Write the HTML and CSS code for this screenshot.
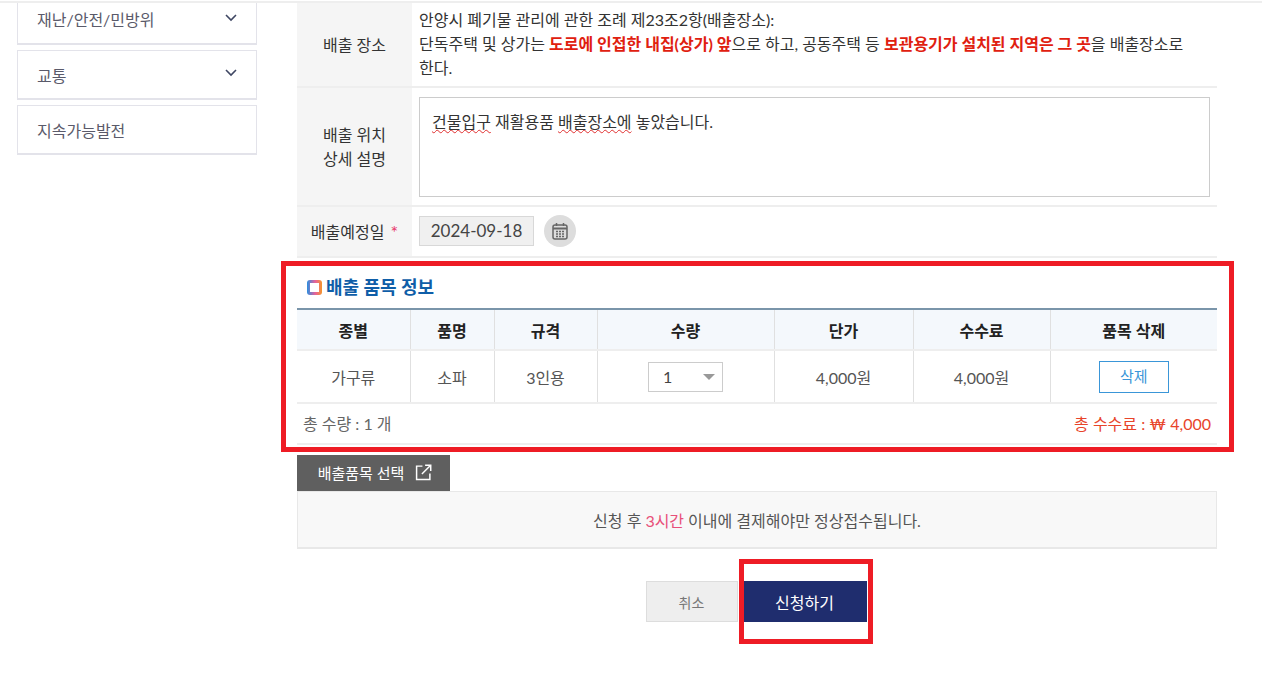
FILE: index.html
```html
<!DOCTYPE html>
<html lang="ko">
<head>
  <meta charset="UTF-8" />
  <meta name="viewport" content="width=device-width, initial-scale=1.0" />
  <title>배출 신청</title>
  <link rel="stylesheet" href="styles.css">
</head>
<body>

  <div class="top-line"></div>

  <div class="wrap">
    <div class="side">
      <div class="side-item first">
        재난/안전/민방위
        <svg class="chev" width="14" height="9" viewBox="0 0 14 9"><path d="M2 2l5 5 5-5" fill="none" stroke="#3f4763" stroke-width="1.6"/></svg>
      </div>
      <div class="side-item">
        교통
        <svg class="chev" width="14" height="9" viewBox="0 0 14 9"><path d="M2 2l5 5 5-5" fill="none" stroke="#3f4763" stroke-width="1.6"/></svg>
      </div>
      <div class="side-item">지속가능발전</div>
    </div>

    <div class="main">
      <div class="form-row row-place">
        <div class="form-label">배출 장소</div>
        <div class="form-value place-text">
          안양시 폐기물 관리에 관한 조례 제23조2항(배출장소):<br>
          단독주택 및 상가는 <strong>도로에 인접한 내집(상가) 앞</strong>으로 하고, 공동주택 등 <strong>보관용기가 설치된 지역은 그 곳</strong>을 배출장소로 한다.
        </div>
      </div>
      <div class="form-row row-detail">
        <div class="form-label">배출 위치<br>상세 설명</div>
        <div class="form-value">
          <div class="textbox"><span class="typo">건물입구</span> 재활용품 <span class="typo">배출장소에</span> 놓았습니다.</div>
        </div>
      </div>
      <div class="form-row row-date">
        <div class="form-label">배출예정일 <span class="req">*</span></div>
        <div class="form-value date-value">
          <div class="date-input">2024-09-18</div>
          <div class="cal-btn">
            <svg width="16" height="18" viewBox="0 0 16 18"><rect x="1" y="3" width="14" height="14" rx="2" fill="none" stroke="#666" stroke-width="1.5"/><path d="M1 6.5h14" stroke="#666" stroke-width="2"/><path d="M4.5 1v3M11.5 1v3" stroke="#666" stroke-width="1.5"/><path d="M4 9.5h2M7 9.5h2M10 9.5h2M4 12h2M7 12h2M10 12h2M4 14.5h2M7 14.5h2M10 14.5h2" stroke="#666" stroke-width="1.4"/></svg>
          </div>
        </div>
      </div>

      <h3 class="sec-title"><span class="sec-icon"></span>배출 품목 정보</h3>

      <table class="item-table">
        <thead>
          <tr>
            <th class="col1">종별</th>
            <th class="col2">품명</th>
            <th class="col3">규격</th>
            <th class="col4">수량</th>
            <th class="col5">단가</th>
            <th class="col6">수수료</th>
            <th>품목 삭제</th>
          </tr>
        </thead>
        <tbody>
          <tr>
            <td>가구류</td>
            <td>소파</td>
            <td>3인용</td>
            <td><div class="qty">1<span class="qty-arrow"></span></div></td>
            <td>4,000원</td>
            <td>4,000원</td>
            <td><button class="del-btn">삭제</button></td>
          </tr>
        </tbody>
      </table>

      <div class="totals">
        <span>총 수량 : 1 개</span>
        <span class="total-fee">총 수수료 : ₩ 4,000</span>
      </div>

      <button class="pick-btn">
        배출품목 선택
        <svg width="17" height="17" viewBox="0 0 16 16"><path d="M7 2H1.500v12.500h12.500V9" fill="none" stroke="#fff" stroke-width="1.4"/><path d="M6.500 9.500L14.500 1.500M9.500 1.200h5.300v5.300" fill="none" stroke="#fff" stroke-width="1.4"/></svg>
      </button>
      <div class="notice">신청 후 <span class="pink">3시간</span> 이내에 결제해야만 정상접수됩니다.</div>

      <div class="actions">
        <button class="btn-cancel">취소</button>
        <button class="btn-submit">신청하기</button>
      </div>
    </div>
  </div>

  <div class="mark mark-table"></div>
  <div class="mark mark-submit"></div>

</body>
</html>
```

FILE: styles.css
```css
* {
  box-sizing: border-box;
}

html, body {
  height: 673px;
  overflow: hidden;
}

body {
  margin: 0;
  padding-top: 1px;
  background: #fff;
  color: #333;
  font-family: Lato, "Noto Sans CJK KR", sans-serif;
  font-size: 16px;
  position: relative;
}

button {
  font-family: inherit;
  cursor: pointer;
}

.top-line {
  height: 2px;
  background: #eee;
}

.wrap {
  display: flex;
  gap: 40px;
  padding-left: 17px;
}

/* left menu */
.side {
  width: 240px;
  display: flex;
  flex-direction: column;
  gap: 5px;
}

.side-item {
  height: 50px;
  padding: 0 18px 0 19px;
  border: 1px solid #e3e3ea;
  border-bottom-width: 2px;
  display: flex;
  align-items: center;
  justify-content: space-between;
  color: #5a5a6a;
}

.side-item.first {
  height: 42px;
  padding-bottom: 8px;
  border-top: 0;
}

.chev {
  margin-top: -4px;
}

/* form rows */
.main {
  width: 920px;
}

.form-row {
  display: flex;
  border-bottom: 2px solid #eee;
}

.form-label {
  width: 115px;
  flex-shrink: 0;
  background: #f5f5f5;
  display: flex;
  align-items: center;
  justify-content: center;
  text-align: center;
  line-height: 24px;
  color: #333;
}

.form-value {
  flex: 1;
  padding-left: 7px;
}

.row-place {
  height: 85px;
}

.place-text {
  padding-top: 5px;
  padding-right: 30px;
  line-height: 24px;
}

.place-text strong {
  color: #e0200f;
}

.row-detail {
  height: 119px;
}

.textbox {
  width: 791px;
  height: 100px;
  margin-top: 9px;
  padding: 12px;
  border: 1px solid #ccc;
  line-height: 24px;
}

.typo {
  text-decoration: underline wavy #e03030 1px;
}

.row-date {
  height: 51px;
}

.date-value {
  display: flex;
  align-items: center;
  gap: 10px;
  padding-bottom: 2px;
}

.date-input {
  width: 115px;
  height: 30px;
  background: #f0f0f0;
  border: 1px solid #d8d8d8;
  color: #444;
  text-align: center;
  font-size: 17px;
  line-height: 28px;
}

.cal-btn {
  width: 32px;
  height: 32px;
  border-radius: 50%;
  background: #ddd;
  display: flex;
  align-items: center;
  justify-content: center;
}

.req {
  color: #e8386a;
  margin-left: 6px;
  font-size: 18px;
}

/* item table */
.sec-title {
  margin: 0;
  height: 50px;
  padding: 8px 0 0 10px;
  display: flex;
  align-items: flex-start;
  color: #0f5ea8;
  font-size: 18px;
  line-height: 42px;
  font-weight: 700;
}

.sec-icon {
  width: 15px;
  height: 15px;
  margin: 14px 4px 0 0;
  border: 3px solid transparent;
  border-radius: 3px;
  background: linear-gradient(#fff, #fff) padding-box, linear-gradient(90deg, #2a8fe0, #e8609a 55%, #f5962a) border-box;
}

.item-table {
  width: 100%;
  border-collapse: collapse;
  table-layout: fixed;
  border-top: 2px solid #7a95aa;
  text-align: center;
}

.item-table th {
  height: 41px;
  background: #f4f8fc;
  font-size: 16px;
  font-weight: 700;
  color: #222;
  border-bottom: 2px solid #eee;
  border-right: 1px solid #e0e0e0;
}

.item-table td {
  height: 53px;
  color: #555;
  border-bottom: 2px solid #eee;
  border-right: 1px solid #e0e0e0;
}

.item-table th:last-child,
.item-table td:last-child {
  border-right: 0;
}

.col1 { width: 113px; }
.col2 { width: 84px; }
.col3 { width: 103px; }
.col4 { width: 177px; }
.col5 { width: 139px; }
.col6 { width: 137px; }

.qty {
  width: 75px;
  height: 30px;
  margin: 0 auto;
  padding-left: 14px;
  border: 1px solid #ccc;
  display: flex;
  align-items: center;
  justify-content: space-between;
  color: #444;
}

.qty-arrow {
  width: 0;
  height: 0;
  margin-right: 7px;
  border-left: 6px solid transparent;
  border-right: 6px solid transparent;
  border-top: 6px solid #999;
}

.del-btn {
  width: 70px;
  height: 32px;
  background: #fff;
  border: 1px solid #3a96d8;
  color: #3a96d8;
  font-size: 15px;
  padding: 0 0 3px;
}

.totals {
  height: 41px;
  padding: 0 6px 2px;
  border-bottom: 2px solid #eee;
  display: flex;
  align-items: center;
  justify-content: space-between;
  color: #666;
}

.total-fee {
  color: #e8442a;
}

.pick-btn {
  display: flex;
  align-items: center;
  justify-content: center;
  gap: 11px;
  width: 153px;
  height: 36px;
  margin-top: 10px;
  padding: 0 0 2px 3px;
  background: #5f5f5f;
  border: 0;
  color: #fff;
  font-size: 15px;
}

.notice {
  height: 58px;
  background: #f8f8f8;
  border: 1px solid #e8e8e8;
  border-bottom-width: 2px;
  display: flex;
  align-items: center;
  justify-content: center;
  color: #555;
}

.pink {
  color: #e8507a;
  margin: 0 4px;
}

.actions {
  display: flex;
  justify-content: center;
  gap: 5px;
  margin-top: 32px;
  padding-right: 2px;
}

.btn-cancel {
  width: 92px;
  height: 41px;
  background: #eee;
  border: 1px solid #ddd;
  color: #777;
  font-size: 14px;
}

.btn-submit {
  width: 124px;
  height: 41px;
  background: #1f2d6e;
  border: 0;
  color: #fff;
  font-size: 16px;
}

/* red annotation boxes drawn over the page */
.mark {
  position: absolute;
  border: 5px solid #ee1c25;
}

.mark-table {
  left: 281px;
  top: 261px;
  width: 953px;
  height: 191px;
}

.mark-submit {
  left: 739px;
  top: 559px;
  width: 134px;
  height: 85px;
}
```
